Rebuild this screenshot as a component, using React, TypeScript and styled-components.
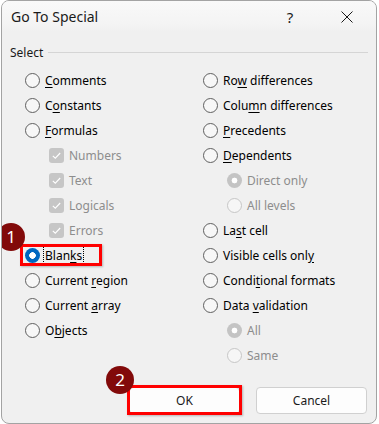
import React from "react"
import styled, { createGlobalStyle, css } from "styled-components"

const GlobalStyle = createGlobalStyle`
	html, body {
		margin: 0;
		padding: 0;
		background: #ffffff;
		overflow: hidden;
	}
	body {
		font-family: "Noto Sans", "Segoe UI", sans-serif;
		color: #000;
	}
`

type Mark = "off" | "on" | "dimOn" | "dimOff" | "check"

type Option = {
	label: string
	mark: Mark
	indent?: boolean
	disabled?: boolean
	focus?: boolean
	badge?: string
}

const leftOptions: Option[] = [
	{ label: "&Comments", mark: "off" },
	{ label: "C&onstants", mark: "off" },
	{ label: "&Formulas", mark: "off" },
	{ label: "Numbers", mark: "check", indent: true, disabled: true },
	{ label: "Text", mark: "check", indent: true, disabled: true },
	{ label: "Logicals", mark: "check", indent: true, disabled: true },
	{ label: "Errors", mark: "check", indent: true, disabled: true },
	{ label: "Blan&ks", mark: "on", focus: true, badge: "1" },
	{ label: "Current &region", mark: "off" },
	{ label: "Current &array", mark: "off" },
	{ label: "O&bjects", mark: "off" },
]

const rightOptions: Option[] = [
	{ label: "Ro&w differences", mark: "off" },
	{ label: "Colu&mn differences", mark: "off" },
	{ label: "&Precedents", mark: "off" },
	{ label: "&Dependents", mark: "off" },
	{ label: "Direct only", mark: "dimOn", indent: true, disabled: true },
	{ label: "All levels", mark: "dimOff", indent: true, disabled: true },
	{ label: "La&st cell", mark: "off" },
	{ label: "Visible cells onl&y", mark: "off" },
	{ label: "Condi&tional formats", mark: "off" },
	{ label: "Data &validation", mark: "off" },
	{ label: "All", mark: "dimOn", indent: true, disabled: true },
	{ label: "Same", mark: "dimOff", indent: true, disabled: true },
]

// "&x" marks the access key letter
const renderLabel = (text: string) => {
	const i = text.indexOf("&")
	if (i < 0) return text
	return (
		<>
			{text.slice(0, i)}
			<Key>{text[i + 1]}</Key>
			{text.slice(i + 2)}
		</>
	)
}

const App = () => {
	const renderOption = (o: Option) => (
		<OptionRow key={o.label} $indent={o.indent}>
			{o.badge && <Badge>{o.badge}</Badge>}
			{o.badge && <Highlight />}
			{o.mark === "check" ? (
				<CheckBox>
					<svg width="11" height="11" viewBox="0 0 11 11">
						<path d="M1.8 5.8 L4.3 8.2 L9.2 3" fill="none" stroke="#fff" strokeWidth="1.1" />
					</svg>
				</CheckBox>
			) : (
				<Radio $mark={o.mark} />
			)}
			<Label $disabled={o.disabled} $focus={o.focus}>
				{renderLabel(o.label)}
			</Label>
		</OptionRow>
	)

	return (
		<>
			<GlobalStyle />
			<Window>
				<TitleBar>
					<Title>Go To Special</Title>
					<Captions>
						<CaptionButton>?</CaptionButton>
						<CaptionButton>
							<svg width="12" height="12" viewBox="0 0 12 12">
								<path d="M0.5 0.5 L11.5 11.5 M11.5 0.5 L0.5 11.5" stroke="#1a1a1a" strokeWidth="1" />
							</svg>
						</CaptionButton>
					</Captions>
				</TitleBar>
				<Body>
					<GroupHeader>
						<span>Select</span>
						<Rule />
					</GroupHeader>
					<Columns>
						<Column>{leftOptions.map(renderOption)}</Column>
						<Column>{rightOptions.map(renderOption)}</Column>
					</Columns>
					<ButtonRow>
						<Button $highlight>
							<Badge $button>2</Badge>
							OK
						</Button>
						<Button>Cancel</Button>
					</ButtonRow>
				</Body>
			</Window>
		</>
	)
}

const Window = styled.div`
	box-sizing: border-box;
	width: 376px;
	height: 424px;
	margin-left: 1px;
	border: 1px solid #a3a3a3;
	border-radius: 8px;
	background: #f0f0f0;
	overflow: hidden;
	display: flex;
	flex-direction: column;
`

const TitleBar = styled.div`
	height: 31px;
	display: flex;
	align-items: center;
	padding-left: 9px;
	background: linear-gradient(#f9f9f9, #f4f4f4 70%, #f0f0f0);
`

const Title = styled.div`
	font-size: 14px;
	line-height: 18px;
	color: #1a1a1a;
	margin-top: 1px;
`

const Captions = styled.div`
	margin-left: auto;
	margin-right: 6px;
	display: flex;
	gap: 11px;
`

const CaptionButton = styled.div`
	width: 46px;
	height: 30px;
	display: flex;
	align-items: center;
	justify-content: center;
	font-size: 15px;
	color: #1a1a1a;
`

const Body = styled.div`
	flex: 1;
	display: flex;
	flex-direction: column;
	padding: 12px 8px 0 8px;
`

const GroupHeader = styled.div`
	display: flex;
	align-items: center;
	gap: 5px;
	font-size: 12px;
	line-height: 17px;
	color: #1a1a1a;
`

const Rule = styled.div`
	flex: 1;
	height: 1px;
	margin-top: -1px;
	background: #d5d5d5;
`

const Columns = styled.div`
	display: grid;
	grid-template-columns: 178px 1fr;
	margin-top: 7px;
	padding-left: 15px;
`

const Column = styled.div`
	display: flex;
	flex-direction: column;
`

const OptionRow = styled.div<{ $indent?: boolean }>`
	position: relative;
	height: 25px;
	display: flex;
	align-items: center;
	gap: 5px;
	padding-left: ${(p) => (p.$indent ? "24px" : "0")};
`

const Radio = styled.span<{ $mark: Mark }>`
	box-sizing: border-box;
	width: 15px;
	height: 15px;
	border-radius: 50%;
	flex-shrink: 0;
	${(p) => {
		switch (p.$mark) {
			case "on":
				return css`
					background: radial-gradient(circle, #fff 0 3px, #0067c0 3.6px);
				`
			case "dimOn":
				return css`
					background: radial-gradient(circle, #fff 0 2.6px, #c4c4c4 3.2px);
				`
			case "dimOff":
				return css`
					border: 1px solid #c6c6c6;
					background: #f6f6f6;
				`
			default:
				return css`
					border: 1px solid #5f5f5f;
					background: #f7f7f7;
				`
		}
	}}
`

const CheckBox = styled.span`
	width: 15px;
	height: 15px;
	border-radius: 3px;
	background: #c6c6c6;
	flex-shrink: 0;
	display: flex;
	align-items: center;
	justify-content: center;
`

const Label = styled.span<{ $disabled?: boolean; $focus?: boolean }>`
	font-size: 12px;
	line-height: 16px;
	white-space: nowrap;
	color: ${(p) => (p.$disabled ? "#8d8d8d" : "#000")};
	${(p) =>
		p.$focus &&
		css`
			outline: 1px dotted #000;
			outline-offset: 1px;
		`}
`

const Key = styled.u`
	text-underline-offset: 2px;
`

const Badge = styled.span<{ $button?: boolean }>`
	position: absolute;
	z-index: 3;
	width: 28px;
	height: 28px;
	border-radius: 50%;
	background: #820a0a;
	color: #fff;
	font-size: 17px;
	line-height: 28px;
	text-align: center;
	left: ${(p) => (p.$button ? "-24px" : "-28px")};
	top: ${(p) => (p.$button ? "-22px" : "-20px")};
`

const Highlight = styled.span`
	position: absolute;
	z-index: 2;
	box-sizing: border-box;
	left: -5px;
	top: 1px;
	width: 82px;
	height: 22px;
	border: 3px solid #ff0000;
	box-shadow: 1px 1px 2px rgba(0, 0, 0, 0.25);
`

const ButtonRow = styled.div`
	margin-top: auto;
	margin-bottom: 9px;
	display: flex;
	justify-content: flex-end;
	gap: 16px;
	padding-right: 1px;
`

const Button = styled.div<{ $highlight?: boolean }>`
	position: relative;
	box-sizing: border-box;
	width: 111px;
	height: 27px;
	display: flex;
	align-items: center;
	justify-content: center;
	background: #fdfdfd;
	border: 1px solid #d0d0d0;
	border-radius: 4px;
	font-size: 12px;
	color: #1a1a1a;
	${(p) =>
		p.$highlight &&
		css`
			&::after {
				content: "";
				position: absolute;
				inset: -3px -3px -2px -3px;
				border: 3px solid #ff0000;
				box-shadow: 1px 1px 2px rgba(0, 0, 0, 0.25);
			}
		`}
`

export default App
